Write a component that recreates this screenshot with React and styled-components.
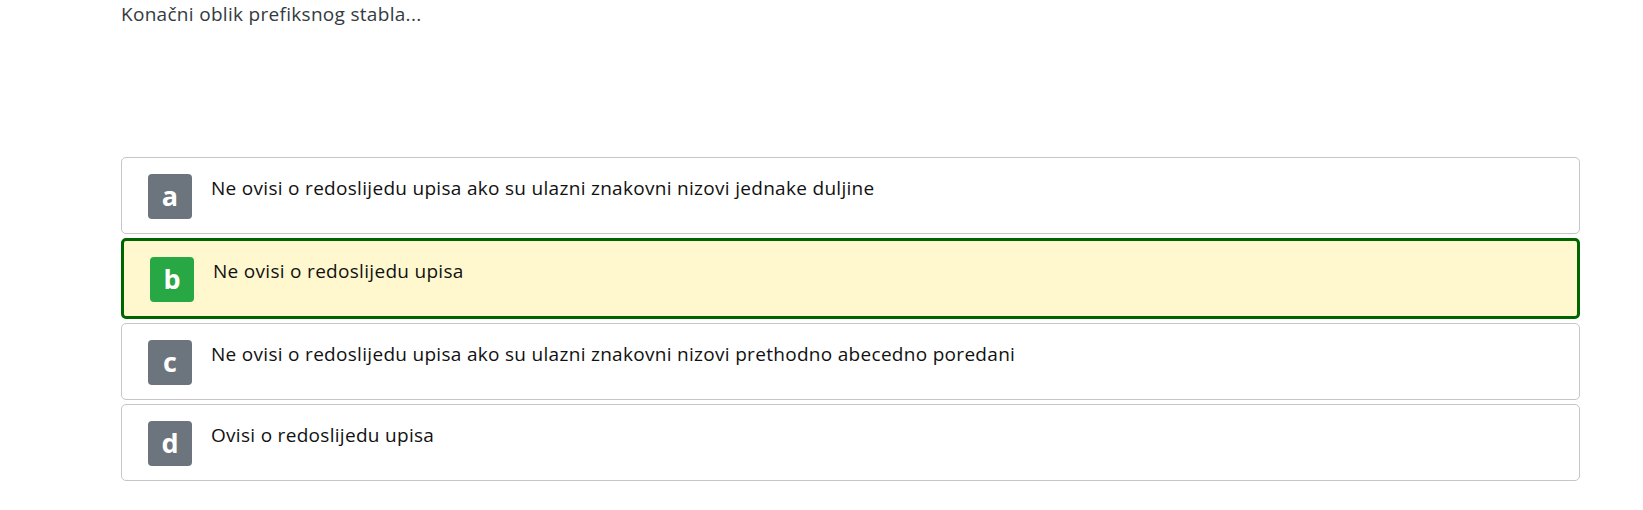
import React from "react";
import styled, { createGlobalStyle } from "styled-components";

const Global = createGlobalStyle`
  html, body { margin: 0; padding: 0; background: #fff; }
  body { font-family: "Open Sans", "Noto Sans", sans-serif; }
`;

const Page = styled.div`
  padding: 0 63px 0 121px;
  display: flex;
  flex-direction: column;
`;

const Question = styled.div`
  font-size: 19px;
  letter-spacing: 0.3px;
  color: #343a40;
  line-height: 29px;
  height: 157px;
`;

const Options = styled.div`
  display: flex;
  flex-direction: column;
  gap: 4px;
`;

const Option = styled.div`
  display: flex;
  align-items: flex-start;
  gap: 19px;
  box-sizing: border-box;
  border: ${(p) => (p.$selected ? "3px solid #006400" : "1px solid #c6c6c6")};
  background: ${(p) => (p.$selected ? "#fff8cf" : "#fff")};
  border-radius: 5px;
  padding: 16px 26px 14px;
`;

const Badge = styled.div`
  flex: 0 0 44px;
  width: 44px;
  height: 45px;
  border-radius: 4px;
  background: ${(p) => (p.$selected ? "#28a745" : "#6c757d")};
  color: #fff;
  font-weight: 700;
  font-size: 27px;
  display: flex;
  align-items: center;
  justify-content: center;
  line-height: 1;
  padding-bottom: 2px;
  box-sizing: border-box;
`;

const Label = styled.div`
  font-size: 19px;
  letter-spacing: 0.3px;
  color: #111;
  line-height: 28px;
`;

const options = [
  { key: "a", text: "Ne ovisi o redoslijedu upisa ako su ulazni znakovni nizovi jednake duljine" },
  { key: "b", text: "Ne ovisi o redoslijedu upisa", selected: true },
  { key: "c", text: "Ne ovisi o redoslijedu upisa ako su ulazni znakovni nizovi prethodno abecedno poredani" },
  { key: "d", text: "Ovisi o redoslijedu upisa" },
];

export default function App() {
  return (
    <>
      <Global />
      <Page>
        <Question>Konačni oblik prefiksnog stabla...</Question>
        <Options>
          {options.map((o) => (
            <Option key={o.key} $selected={o.selected}>
              <Badge $selected={o.selected}>{o.key}</Badge>
              <Label>{o.text}</Label>
            </Option>
          ))}
        </Options>
      </Page>
    </>
  );
}
